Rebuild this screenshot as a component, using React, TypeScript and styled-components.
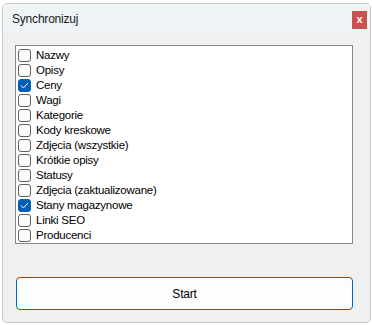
import React, { useState } from "react";
import styled, { createGlobalStyle } from "styled-components";

const GlobalStyle = createGlobalStyle`
  html, body {
    margin: 0;
    padding: 0;
    background: #ffffff;
  }
  body {
    font-family: "Liberation Sans", Arial, sans-serif;
    font-size: 12px;
    color: #000;
  }
`;

const items = [
  { label: "Nazwy", checked: false },
  { label: "Opisy", checked: false },
  { label: "Ceny", checked: true },
  { label: "Wagi", checked: false },
  { label: "Kategorie", checked: false },
  { label: "Kody kreskowe", checked: false },
  { label: "Zdjęcia (wszystkie)", checked: false },
  { label: "Krótkie opisy", checked: false },
  { label: "Statusy", checked: false },
  { label: "Zdjęcia (zaktualizowane)", checked: false },
  { label: "Stany magazynowe", checked: true },
  { label: "Linki SEO", checked: false },
  { label: "Producenci", checked: false },
];

export default function App() {
  const [state, setState] = useState(items);

  const toggle = (i: number) => {
    setState((s) => s.map((it, j) => (j === i ? { ...it, checked: !it.checked } : it)));
  };

  return (
    <>
      <GlobalStyle />
      <Screen>
        <Window>
          <TitleBar>
            <Title>Synchronizuj</Title>
            <CloseButton>x</CloseButton>
          </TitleBar>
          <Body>
            <CheckList>
              {state.map((it, i) => (
                <Row key={it.label} onClick={() => toggle(i)}>
                  <Box $checked={it.checked}>
                    {it.checked && (
                      <svg width="9" height="7" viewBox="0 0 9 7">
                        <path d="M1 3.6 L3.4 6 L8 1" fill="none" stroke="#fff" strokeWidth="1" />
                      </svg>
                    )}
                  </Box>
                  <Label>{it.label}</Label>
                </Row>
              ))}
            </CheckList>
            <StartButton>Start</StartButton>
          </Body>
        </Window>
      </Screen>
    </>
  );
}

const Screen = styled.div`
  padding: 3px 1px 2px 2px;
  width: 372px;
  height: 325px;
  box-sizing: border-box;
`;

const Window = styled.div`
  width: 369px;
  height: 320px;
  box-sizing: border-box;
  border: 1px solid #c8c8c8;
  border-radius: 5px;
  overflow: hidden;
  background: #f0f0f0;
  display: flex;
  flex-direction: column;
`;

const TitleBar = styled.div`
  height: 29px;
  background: #eef3f6;
  display: flex;
  align-items: flex-start;
  justify-content: space-between;
  padding: 0 3px 0 9px;
`;

const Title = styled.div`
  margin-top: 8px;
  font-size: 12px;
  line-height: 14px;
  letter-spacing: -0.2px;
  color: #1a1a1a;
`;

const CloseButton = styled.div`
  margin-top: 7px;
  width: 15px;
  height: 18px;
  background: #c75050;
  color: #fff;
  font-weight: bold;
  font-size: 11px;
  line-height: 16px;
  text-align: center;
`;

const Body = styled.div`
  flex: 1;
  padding: 12px 17px 0 12px;
  display: flex;
  flex-direction: column;
`;

const CheckList = styled.div`
  height: 199px;
  box-sizing: border-box;
  border: 1px solid #828790;
  background: #fff;
  padding: 2px 0 0 1px;
`;

const Row = styled.div`
  height: 15px;
  display: flex;
  align-items: center;
  cursor: default;
`;

const Box = styled.div<{ $checked: boolean }>`
  width: 13px;
  height: 13px;
  box-sizing: border-box;
  margin-left: 1px;
  border-radius: 3px;
  border: 1px solid ${(p) => (p.$checked ? "#005fb8" : "#616161")};
  background: ${(p) => (p.$checked ? "#005fb8" : "#fbfbfb")};
  display: flex;
  align-items: center;
  justify-content: center;
`;

const Label = styled.span`
  margin-left: 5px;
  font-size: 11.5px;
  letter-spacing: -0.25px;
  line-height: 15px;
  white-space: nowrap;
`;

const StartButton = styled.button`
  margin: 33px 0 0 1px;
  width: 337px;
  height: 33px;
  box-sizing: border-box;
  border: 1px solid #0067c0;
  border-radius: 4px;
  background: #fdfdfd;
  font-family: inherit;
  font-size: 12px;
  letter-spacing: -0.2px;
  color: #000;
  padding: 0;
`;
